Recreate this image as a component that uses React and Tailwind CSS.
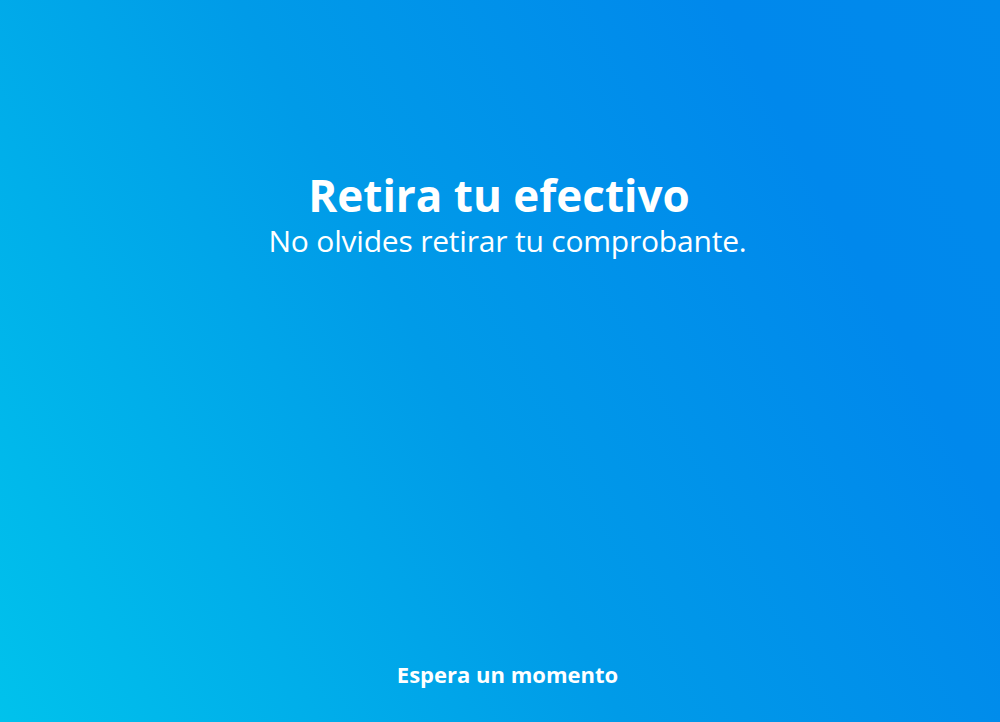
import React from "react";

const App = () => {
  return (
    <div
      className="flex h-[722px] w-full flex-col items-center bg-[linear-gradient(62deg,#00c2ec_0%,#009be8_45%,#0088ec_80%,#008aec_100%)] text-white"
      style={{ fontFamily: '"Open Sans", "Liberation Sans", sans-serif' }}
    >
      {/* mensaje principal */}
      <div className="mt-[169px] flex flex-col items-center">
        <h1 className="pr-[2px] text-[44px] leading-[52px] font-bold">Retira tu efectivo</h1>
        <p className="pl-[15px] text-[30px] leading-[40px] tracking-[-0.2px]">No olvides retirar tu comprobante.</p>
      </div>

      <div className="mt-auto mb-[34px] pl-[15px]">
        <p className="text-[22px] leading-[28px] font-bold">Espera un momento</p>
      </div>
    </div>
  );
};

export default App;
